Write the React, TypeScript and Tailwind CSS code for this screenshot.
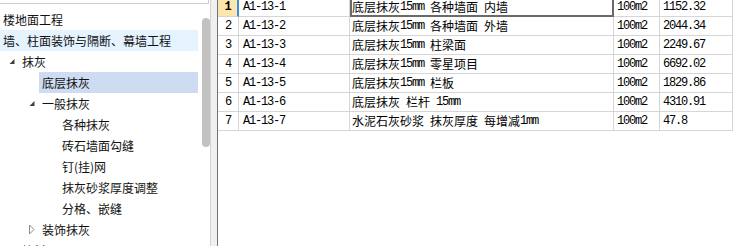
import React from "react";

type TreeRow = {
  label: string;
  pad: string;
  icon?: "open" | "closed";
  bg?: string;
};

const tree: TreeRow[] = [
  { label: "楼地面工程", pad: "" },
  { label: "墙、柱面装饰与隔断、幕墙工程", pad: "", bg: "bg-[#e5f3ff]" },
  { label: "抹灰", pad: "pl-[6px]", icon: "open" },
  { label: "底层抹灰", pad: "pl-[26px]", bg: "bg-[#cddcf0]" },
  { label: "一般抹灰", pad: "pl-[26px]", icon: "open" },
  { label: "各种抹灰", pad: "pl-[46px]" },
  { label: "砖石墙面勾缝", pad: "pl-[46px]" },
  { label: "钉(挂)网", pad: "pl-[46px]" },
  { label: "抹灰砂浆厚度调整", pad: "pl-[46px]" },
  { label: "分格、嵌缝", pad: "pl-[46px]" },
  { label: "装饰抹灰", pad: "pl-[26px]", icon: "closed" },
  { label: "块料面层", pad: "pl-[6px]" },
];

const rows = [
  ["A1-13-1", "底层抹灰15mm 各种墙面 内墙", "100m2", "1152.32"],
  ["A1-13-2", "底层抹灰15mm 各种墙面 外墙", "100m2", "2044.34"],
  ["A1-13-3", "底层抹灰15mm 柱梁面", "100m2", "2249.67"],
  ["A1-13-4", "底层抹灰15mm 零星项目", "100m2", "6692.02"],
  ["A1-13-5", "底层抹灰15mm 栏板", "100m2", "1829.86"],
  ["A1-13-6", "底层抹灰 栏杆 15mm", "100m2", "4310.91"],
  ["A1-13-7", "水泥石灰砂浆 抹灰厚度 每增减1mm", "100m2", "47.8"],
];

const mono = "font-['Liberation_Mono',monospace] tracking-[-1.2px]";

function Mixed({ text }: { text: string }) {
  const parts = text.split(/([\x00-\x7F]+)/).filter(Boolean);
  return (
    <>
      {parts.map((p, i) =>
        /^[\x00-\x7F]+$/.test(p) ? (
          <span key={i} className={`${mono} whitespace-pre`}>
            {p}
          </span>
        ) : (
          <span key={i}>{p}</span>
        )
      )}
    </>
  );
}

function Arrow({ kind }: { kind: "open" | "closed" }) {
  if (kind === "open") {
    return (
      <svg width="13" height="10" viewBox="0 0 13 10" className="shrink-0">
        <polygon points="8.5,2 8.5,7 3.5,7" fill="#3f3f3f" />
      </svg>
    );
  }
  return (
    <svg width="13" height="11" viewBox="0 0 13 11" className="shrink-0">
      <polygon
        points="3.5,1 8,5.5 3.5,10"
        fill="#fff"
        stroke="#8a8a8a"
        strokeWidth="1"
      />
    </svg>
  );
}

function Tree() {
  return (
    <div className="flex w-[211px] flex-col border-r border-[#d4d4d4] bg-white">
      <div className="h-[4px] w-[209px] border-b border-r border-[#cdcdcd]" />
      <div className="flex min-h-0 flex-1">
        <div className="w-[200px] overflow-hidden pr-[2px] pt-[5px]">
          {tree.map((r) => (
            <div
              key={r.label}
              className={`flex h-[21px] items-center ${r.pad}`}
            >
              {r.pad &&
                (r.icon ? (
                  <Arrow kind={r.icon} />
                ) : (
                  <span className="w-[13px] shrink-0" />
                ))}
              <div
                className={`flex h-full flex-1 items-center whitespace-nowrap pl-[3px] text-[12px] text-[#111] ${
                  r.bg ?? ""
                }`}
              >
                {r.label}
              </div>
            </div>
          ))}
        </div>
        <div className="w-[10px] pl-[2px]">
          <div className="mt-[14px] h-[129px] w-[8px] rounded-full bg-[#c2c2c2]" />
        </div>
      </div>
    </div>
  );
}

function Table() {
  return (
    <div className="min-w-0 flex-1 overflow-hidden bg-white">
      <div className="-mt-[2px]">
        {rows.map((r, i) => {
          const first = i === 0;
          return (
            <div key={r[0]} className="flex h-[19px] text-[12px] text-black">
              <div
                className={`flex w-[21px] items-center justify-center border-b border-[#d6d6d6] ${
                  first
                    ? "border-r-2 border-r-[#3b8fdc] bg-[#fde6ad] font-bold"
                    : "border-r border-r-[#d6d6d6]"
                } ${mono}`}
              >
                {i + 1}
              </div>
              <div
                className={`flex w-[111px] items-center border-b border-r border-[#d6d6d6] pl-[4px] ${mono}`}
              >
                {r[0]}
              </div>
              <div
                className={`flex w-[264px] items-center whitespace-nowrap ${
                  first
                    ? "border-x-2 border-b-2 border-[#6a6a6a] pl-0"
                    : "border-b border-r border-[#d6d6d6] pl-[2px]"
                }`}
              >
                <Mixed text={r[1]} />
              </div>
              <div
                className={`flex w-[46px] items-center border-b border-r border-[#d6d6d6] pl-[3px] ${mono}`}
              >
                {r[2]}
              </div>
              <div
                className={`flex w-[73px] items-center border-b border-r border-[#d6d6d6] pl-[3px] ${mono}`}
              >
                {r[3]}
              </div>
            </div>
          );
        })}
      </div>
    </div>
  );
}

export default function App() {
  return (
    <div className="flex h-[246px] w-[739px] overflow-hidden bg-white font-['Noto_Sans_CJK_SC',sans-serif]">
      <Tree />
      <div className="w-[7px] border-r border-[#6b7583] bg-[#f0f0f0]" />
      <Table />
    </div>
  );
}
